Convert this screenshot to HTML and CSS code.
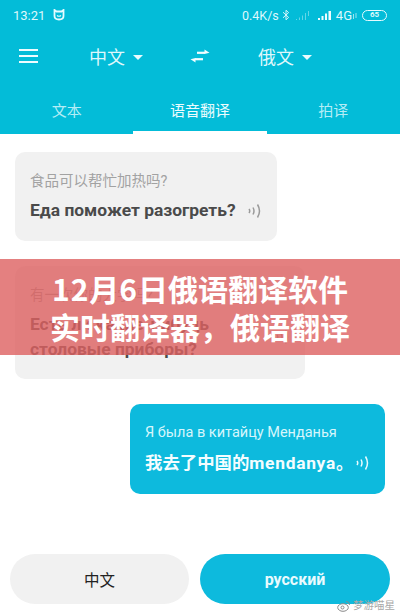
FILE: index.html
```html
<!DOCTYPE html>
<html lang="zh">
<head>
<meta charset="utf-8">
<title>语音翻译</title>
<link rel="stylesheet" href="styles.css">
</head>
<body>
<div class="app">
  <header class="head">
    <div class="status">
      <div class="status-left">
        <span>13:21</span>
        <svg class="mi" width="12" height="12" viewBox="0 0 12 12"><path d="M1.500 1 L3.500 2.500 H8.500 L10.500 1 V7 Q10.500 10.500 6 10.500 Q1.500 10.500 1.500 7 Z" fill="none" stroke="#e6fbff" stroke-width="1.800"/><path d="M4 6.500Q6 8 8 6.500" fill="none" stroke="#e6fbff" stroke-width="1.200"/></svg>
      </div>
      <div class="status-right">
        <span>0.4K/s</span>
        <svg width="8" height="12" viewBox="0 0 8 12"><path d="M1 3.200 L6.600 8.400 L4 10.800 V1.200 L6.600 3.600 L1 8.800" fill="none" stroke="#d8f6fb" stroke-width="1"/></svg>
        <svg class="sig dim" width="16" height="11" viewBox="0 0 16 11"><path d="M1 9h1v1H1zM4 7.500h1V10H4zM7 5.500h1V10H7zM10 3h1v7h-1zM13 1h1v5h-1z" fill="#d8f6fb"/></svg>
        <svg class="sig" width="16" height="11" viewBox="0 0 16 11"><path d="M1 8h2v2H1zM4.500 6h2v4h-2zM8 3.500h2V10H8zM11.500 1h2.500v9h-2.500z" fill="#eefcff"/></svg>
        <span class="net">4G</span>
        <svg class="arrows" width="4" height="6" viewBox="0 0 4 6"><path d="M0 1h1v5H0zM2.500 0h1v5h-1z" fill="#d8f6fb"/></svg>
        <span class="batt"><span class="batt-num">65</span></span>
      </div>
    </div>
    <div class="toolbar">
      <button class="menu" aria-label="菜单"><i></i><i></i><i></i></button>
      <div class="lang lang-a"><span>中文</span><b class="caret"></b></div>
      <svg class="swap" width="20" height="16" viewBox="0 0 20 16"><path d="M7 4.800H15" fill="none" stroke="#f2fdff" stroke-width="2.200"/><path d="M14.500 1.500L19.500 4.800L14.500 5.900Z" fill="#f2fdff"/><path d="M13 11.200H5" fill="none" stroke="#f2fdff" stroke-width="2.200"/><path d="M5.500 14.500L0.500 11.200L5.500 10.100Z" fill="#f2fdff"/></svg>
      <div class="lang lang-b"><span>俄文</span><b class="caret"></b></div>
    </div>
    <nav class="tabs">
      <div class="tab">文本</div>
      <div class="tab tab-on">语音翻译</div>
      <div class="tab">拍译</div>
    </nav>
  </header>

  <main class="chat">
    <div class="bubble b1">
      <p class="src">食品可以帮忙加热吗?</p>
      <p class="dst"><span>Еда поможет разогреть?</span>
        <svg class="wave" width="15" height="16" viewBox="0 0 15 16"><path d="M2 6Q3.500 8 2 10M6 4.500Q8 8 6 11.500M10.500 1.500Q14.500 8 10.500 14.500" fill="none" stroke="#9a9a9a" stroke-width="1.500"/></svg></p>
    </div>
    <div class="bubble b2">
      <p class="src">有一次你的大学吗?</p>
      <p class="dst"><span>Есть ли какие-нибудь<br>столовые приборы?</span>
        <svg class="wave" width="15" height="16" viewBox="0 0 15 16"><path d="M2 6Q3.500 8 2 10M6 4.500Q8 8 6 11.500M10.500 1.500Q14.500 8 10.500 14.500" fill="none" stroke="#9a9a9a" stroke-width="1.500"/></svg></p>
    </div>
    <div class="bubble b3">
      <p class="src">Я была в китайцу Менданья</p>
      <p class="dst"><span>我去了中国的<span class="latin">mendanya</span>。</span>
        <svg class="wave" width="15" height="16" viewBox="0 0 15 16"><path d="M2 6Q3.500 8 2 10M6 4.500Q8 8 6 11.500M10.500 1.500Q14.500 8 10.500 14.500" fill="none" stroke="#e8fbff" stroke-width="1.500"/></svg></p>
    </div>
  </main>

  <footer class="foot">
    <button class="btn btn-zh">中文</button>
    <button class="btn btn-ru">русский</button>
  </footer>

  <div class="banner"><span class="num">12</span>月<span class="num">6</span>日俄语翻译软件<br>实时翻译器，俄语翻译</div>
  <div class="mark">
    <svg width="15" height="12" viewBox="0 0 15 12"><ellipse cx="6" cy="7.500" rx="5.300" ry="3.800" fill="#fff" stroke="#8a8a8a" stroke-width="1"/><circle cx="5.500" cy="7.500" r="1.500" fill="none" stroke="#8a8a8a" stroke-width="1"/><path d="M9 1.500Q12.500 1.500 12.500 5" fill="none" stroke="#8a8a8a" stroke-width="1"/></svg>
    <span>梦游喵星</span>
  </div>
</div>
</body>
</html>
```
FILE: styles.css
```css
* { box-sizing: border-box; }
html, body { margin: 0; padding: 0; }
body {
  width: 400px;
  height: 615px;
  overflow: hidden;
  background: #fff;
  font-family: Roboto, "Noto Sans CJK SC", sans-serif;
}
p { margin: 0; }
button { border: 0; padding: 0; background: none; font: inherit; }

.app { position: relative; width: 400px; height: 615px; overflow: hidden; background: #fff; }

.head { background: #03bcd8; height: 134px; color: #fff; }

.status {
  height: 30px;
  padding: 0 13px;
  display: flex;
  justify-content: space-between;
  align-items: center;
  color: #def8fc;
}
.status-left { display: flex; align-items: center; gap: 8px; font-size: 13px; }
.status-right { display: flex; align-items: center; gap: 3px; font-size: 12.500px; }
.sig.dim { opacity: .45; margin: 0 3px 0 2px; }
.net { font-size: 13px; }
.arrows { opacity: .7; margin: 2px 2px 0 -2px; }
.batt {
  width: 25px;
  height: 11px;
  border: 1px solid #e6fbff;
  border-radius: 6px;
  display: flex;
  align-items: center;
  justify-content: center;
}
.batt-num { font-size: 8px; font-weight: 700; line-height: 1; }

.toolbar { height: 52px; display: flex; align-items: center; padding-left: 19px; }
.menu { width: 19px; display: flex; flex-direction: column; gap: 4px; }
.menu i { display: block; height: 2px; background: #eefcff; }
.lang { display: flex; align-items: center; gap: 8px; font-size: 18px; color: #dff7fb; }
.lang-a { margin-left: 51px; }
.swap { margin-left: 47px; }
.lang-b { margin-left: 48px; }
.caret {
  width: 0;
  height: 0;
  border-left: 5px solid transparent;
  border-right: 5px solid transparent;
  border-top: 5px solid #e9fbfe;
  margin-top: 2px;
}

.tabs { height: 52px; display: flex; }
.tab {
  flex: 1;
  display: flex;
  align-items: center;
  justify-content: center;
  padding-top: 6px;
  font-size: 15px;
  color: #b4edf6;
  border-bottom: 3px solid transparent;
}
.tab-on { color: #ecfcfe; border-bottom-color: #fff; }

.chat { display: flex; flex-direction: column; align-items: flex-start; padding: 18px 15px 0; }
.bubble { border-radius: 10px; background: #f1f1f1; padding: 18px 15px 0; }
.src { font-size: 14.500px; line-height: 24px; color: #a2a2a2; }
.dst { display: flex; align-items: center; justify-content: space-between; margin-top: 4px; font-size: 17.400px; line-height: 25px; font-weight: 700; color: #4a4a4a; }
.b1 { width: 262px; height: 89px; }
.b2 { width: 290px; height: 113px; margin-top: 25px; }
.b3 { width: 255px; height: 90px; margin-top: 25px; margin-left: 115px; padding-top: 17px; background: #0dbadd; }
.b3 .src { color: #d6f6fc; }
.b3 .dst { color: #f4fdff; margin-top: 5.500px; }
.latin { letter-spacing: .7px; }

.foot { position: absolute; left: 10px; top: 554px; width: 380px; display: flex; gap: 10px; }
.btn { height: 50px; border-radius: 25px; font-size: 15.500px; }
.btn-zh { width: 179px; background: #f1f1f1; color: #222; }
.btn-ru { width: 190px; margin-left: 1px; background: #0dbadd; color: #eafbfe; font-size: 16px; font-weight: 700; }

.banner {
  position: absolute;
  left: 0;
  top: 259px;
  width: 400px;
  height: 96px;
  padding-top: 10px;
  background: rgba(221, 96, 96, .8);
  color: #fff;
  font-family: "Noto Sans CJK SC", sans-serif;
  font-weight: 700;
  font-size: 30px;
  line-height: 38px;
  text-align: center;
}
.num { letter-spacing: 1px; }

.mark {
  position: absolute;
  right: 5px;
  bottom: 2px;
  display: flex;
  align-items: center;
  gap: 1px;
  font-size: 10.500px;
  line-height: 14px;
  color: #a8a8a8;
}
```
